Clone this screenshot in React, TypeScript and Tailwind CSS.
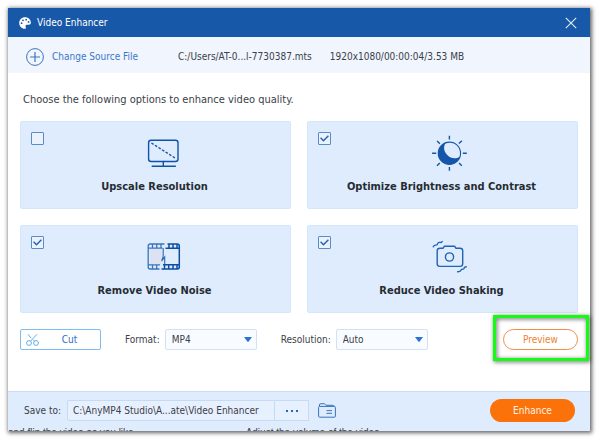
import { useState, type ReactNode } from "react";

function MonitorIcon() {
  return (
    <svg viewBox="0 0 36 36" className="size-9" fill="none" stroke="#0f52ad" strokeWidth="1.4">
      <rect x="3.6" y="4.2" width="29.4" height="21.3" rx="2.5" />
      <path d="M18.3 25.5V30M7.2 30.3H30.4" strokeLinecap="round" />
      <path d="M6.4 7L31 22.6" strokeDasharray="2.6 1.6" />
    </svg>
  );
}

function BrightnessIcon() {
  return (
    <svg viewBox="0 0 36 36" className="size-9 overflow-visible" fill="none" stroke="#1556ab" strokeWidth="1.4">
      <circle cx="17.4" cy="17.3" r="11" fill="#1556ab" />
      <path d="M13.2 7.8C17.5 5.8 22 6.6 25 9.7C28 12.8 28.7 17.5 27.4 20.8C24 23.4 18.6 22.6 15.3 19.1C12 15.7 11.2 11.3 13.2 7.8Z" fill="#dfecfd" stroke="none" />
      <path
        d="M17.4 -.2V3.6M17.4 31V34.8M0.1 17.3H4.2M30.8 17.3H34.8M5.1 5L7.9 7.8M26.9 7.6L29.9 4.8M5 29.7L7.8 26.9M27 27L29.8 29.8"
      />
    </svg>
  );
}

function FilmIcon() {
  return (
    <svg viewBox="0 0 36 36" className="size-9" fill="none">
      <path d="M5 9H17V17L19 19L16 25H5Z" fill="#dce2f2" />
      <g stroke="#3a74bd" strokeWidth="1.3">
        <path d="M19.5 4H5.2Q3.2 4 3.2 6V27Q3.2 29 5.2 29H14.5M3.5 8.2H17.5M3.5 24.8H15" />
        <path d="M7.5 4V8M11.7 4V8M16 4V8M7.5 25V29M11.7 25V29" />
      </g>
      <path d="M18.2 8V16.5L16.7 21L19.7 17V25" stroke="#2867b5" strokeWidth="1.1" />
      <g stroke="#0c4da5" strokeWidth="1.5">
        <path d="M22.5 4H32.3Q34.3 4 34.3 6V27Q34.3 29 32.3 29H16.5M20.5 8.2H34M18 24.8H34" />
        <path d="M24 4V8M28 4V8M32 4V8M19.5 25V29M23.7 25V29M28 25V29M32 25V29" />
      </g>
    </svg>
  );
}

function CameraIcon() {
  return (
    <svg viewBox="0 0 36 36" className="size-9" fill="none" stroke="#2163b4" strokeWidth="1.4" strokeLinecap="round" strokeLinejoin="round">
      <path d="M8 8.2H11.2L12.4 6.2H22.6L23.8 8.2H28Q30.7 8.2 30.7 10.8V23.8Q30.7 26.4 28 26.4H7.9Q5.2 26.4 5.2 23.8V10.8Q5.2 8.2 8 8.2Z" />
      <circle cx="17.5" cy="17" r="4.1" />
      <path d="M1.3 6.8Q2 5 3.8 5.1Q5.3 5.2 5.8 3.4Q6.1 2.3 7.3 2.4Q9.3 2.8 10.2 1.6M25.6 31.8Q28.5 32 29.2 29.9Q29.6 29 31 29.1Q32 29.2 32.2 28Q32.5 26.8 34.3 26.8" />
    </svg>
  );
}

type Option = { id: string; title: string; icon: ReactNode; on: boolean };

const OPTIONS: Option[] = [
  { id: "upscale", title: "Upscale Resolution", icon: <MonitorIcon />, on: false },
  { id: "brightness", title: "Optimize Brightness and Contrast", icon: <BrightnessIcon />, on: true },
  { id: "noise", title: "Remove Video Noise", icon: <FilmIcon />, on: true },
  { id: "shaking", title: "Reduce Video Shaking", icon: <CameraIcon />, on: true },
];

function OptionCard({ option }: { option: Option }) {
  const [checked, setChecked] = useState(option.on);

  return (
    <label htmlFor={option.id} className="block rounded-xs border border-[#d5e6fa] bg-[#dfecfd] pt-[10px] pr-2 pb-[11px] pl-[10px]">
      <span className="flex items-start">
        <span className="grid size-[13px]">
          <input
            id={option.id}
            type="checkbox"
            checked={checked}
            onChange={(e) => setChecked(e.target.checked)}
            className="col-start-1 row-start-1 size-[13px] appearance-none rounded-[1px] border border-[#5c8bcb] bg-[#eaf2fe]"
          />
          {checked && (
            <svg viewBox="0 0 13 13" className="pointer-events-none col-start-1 row-start-1 size-[13px]" fill="none" stroke="#2463b5" strokeWidth="1.5">
              <path d="M2.6 5.8L5.5 8.7L10.4 3.8" />
            </svg>
          )}
        </span>
        <span className="mt-1 flex flex-1 justify-center">{option.icon}</span>
      </span>
      <span className="mt-[5px] block pr-1 text-center text-[11px] leading-5 font-bold text-[#262c33]">{option.title}</span>
    </label>
  );
}

function Dropdown({ id, label, values }: { id: string; label: string; values: string[] }) {
  return (
    <div className="flex items-center gap-[5px]">
      <label htmlFor={id}>{label}</label>
      <span className="grid w-[92px] items-center">
        <select id={id} className="col-start-1 row-start-1 h-[21px] w-full appearance-none rounded-xs border border-[#d3e1f5] bg-[#f8fbff] pl-[6px]">
          {values.map((v) => (
            <option key={v}>{v}</option>
          ))}
        </select>
        <svg viewBox="0 0 8 5" className="pointer-events-none col-start-1 row-start-1 mr-[5px] h-[5px] w-2 justify-self-end">
          <path d="M0 0H8L4.6 4.6Q4 5.2 3.4 4.6Z" fill="#2a73d2" />
        </svg>
      </span>
    </div>
  );
}

export default function App() {
  const [path, setPath] = useState("C:\\AnyMP4 Studio\\A...ate\\Video Enhancer");

  return (
    <div className="flex min-h-screen bg-white pt-2 pr-[9px] pb-[9px] pl-2 font-['DejaVu_Sans_Condensed','DejaVu_Sans',sans-serif] text-[10px] font-[stretch:condensed] text-[#3b4148]">
      <main className="flex flex-1 flex-col bg-white shadow-[1px_1px_4px_1px_rgba(0,0,0,0.6)]">
        <header className="flex h-[29px] shrink-0 items-center bg-[#1858a9] pr-[13px] pl-[11px] text-white">
          <svg viewBox="0 0 12 12" className="size-3">
            <path
              fill="white"
              fillRule="evenodd"
              d="M6 .3C2.8.3.2 2.7.2 6S2.8 11.8 5.7 11.8C7 11.8 7.2 10.8 6.7 10C6.1 9 6.6 7.8 7.8 7.8H9.7C11 7.8 11.9 7 11.9 5.6C11.8 2.5 9.2.3 6 .3ZM2.6 5.3a.9.9 0 1 0 0 1.8a.9.9 0 0 0 0-1.8ZM4 2.4a.9.9 0 1 0 0 1.8a.9.9 0 0 0 0-1.8ZM7.2 1.8a.9.9 0 1 0 0 1.8a.9.9 0 0 0 0-1.8ZM9.6 4a.9.9 0 1 0 0 1.8a.9.9 0 0 0 0-1.8Z"
            />
          </svg>
          <h1 className="ml-[6px] flex-1 font-normal">Video Enhancer</h1>
          <button type="button" aria-label="Close">
            <svg viewBox="0 0 12 12" className="size-3" stroke="#e3edf9" strokeWidth="1.1">
              <path d="M.8.8L11.2 11.2M11.2.8L.8 11.2" />
            </svg>
          </button>
        </header>

        <div className="flex h-9 shrink-0 items-center bg-[#f0f5fe] pt-[3px] pl-[18px]">
          <button type="button" className="flex items-center gap-2 text-[#3d78c6]">
            <svg viewBox="0 0 18 18" className="size-[18px]" fill="none" stroke="#3c75bf">
              <circle cx="9" cy="9" r="8.4" />
              <path d="M9 4V14M4 9H14" strokeWidth="1.2" />
            </svg>
            Change Source File
          </button>
          <span className="ml-10">C:/Users/AT-0...l-7730387.mts</span>
          <span className="ml-[18px]">1920x1080/00:00:04/3.53 MB</span>
        </div>

        <section className="flex flex-1 flex-col px-3">
          <p className="mt-[17px] pl-[3px] text-[11px] leading-5">Choose the following options to enhance video quality.</p>
          <div className="mt-[11px] grid grid-cols-2 gap-4">
            {OPTIONS.map((option) => (
              <OptionCard key={option.id} option={option} />
            ))}
          </div>

          <div className="mt-4 mb-10 flex items-center">
            <button type="button" className="flex h-[21px] w-[81px] items-center rounded-xs border border-[#7fbcf0] pl-[5px] text-[#2a6fc9]">
              <svg viewBox="0 0 13 12" className="h-3 w-[13px]" fill="none" stroke="#62aee5">
                <circle cx="3" cy="9" r="2.4" />
                <circle cx="10" cy="9" r="2.4" />
                <path d="M2 .3L5.2 4.2M11 .3L4.4 7.3M7.3 5.7L8.6 7.2" />
              </svg>
              <span className="flex-1 text-center">Cut</span>
            </button>
            <span className="ml-6">
              <Dropdown id="format" label="Format:" values={["MP4", "MKV", "MOV"]} />
            </span>
            <span className="ml-6">
              <Dropdown id="resolution" label="Resolution:" values={["Auto", "1920x1080", "1280x720"]} />
            </span>
            <div className="relative ml-auto">
              <button type="button" className="block h-[21px] w-[75px] rounded-full border border-[#f58d45] text-[#f0812f]">
                Preview
              </button>
              {/* highlight around the preview button */}
              <div className="pointer-events-none absolute -top-[14px] -right-[11px] -bottom-[11px] -left-[10px] border-3 border-[#14fb14] drop-shadow-[1px_1px_2px_rgba(0,0,0,0.65)]" />
            </div>
          </div>
        </section>

        <footer className="h-10 shrink-0 border-t border-[#c9dcf3] bg-[#dfecfd]">
          <div className="flex h-9 items-center pt-px pr-[15px] pl-4">
            <label htmlFor="path">Save to:</label>
            <input
              id="path"
              value={path}
              onChange={(e) => setPath(e.target.value)}
              className="ml-[6px] h-[21px] w-[208px] rounded-l-xs border border-[#c7daf3] bg-[#e7f0fe] pl-[5px]"
            />
            <button type="button" aria-label="Browse" className="flex h-[21px] w-[34px] items-center justify-center gap-[3px] border border-l-0 border-[#c7daf3] bg-[#e7f0fe]">
              <span className="size-[2px] bg-[#2567b7]" />
              <span className="size-[2px] bg-[#2567b7]" />
              <span className="size-[2px] bg-[#2567b7]" />
            </button>
            <button type="button" aria-label="Open folder" className="ml-[9px]">
              <svg viewBox="0 0 18 15" className="h-[15px] w-[18px]" fill="none" stroke="#3474bd">
                <path d="M1.5 3.5V2Q1.5.7 2.8.7H6.5L8 2.3H14.8Q16 2.3 16 3.5" />
                <rect x=".6" y="3.4" width="16.8" height="10.8" rx="1" />
                <path d="M8.5 7.6H14M8.5 10.3H14" />
              </svg>
            </button>
            <button type="button" className="ml-auto h-[23px] w-[85px] rounded-full bg-[#fb720a] text-[#fff3e8]">
              Enhance
            </button>
          </div>
          <div aria-hidden="true" className="flex h-[3px] gap-28 overflow-hidden font-['Liberation_Sans',sans-serif] leading-[10px] text-[#3b4148]">
            <span>and flip the video as you like</span>
            <span>Adjust the volume of the video</span>
          </div>
        </footer>
      </main>
    </div>
  );
}
